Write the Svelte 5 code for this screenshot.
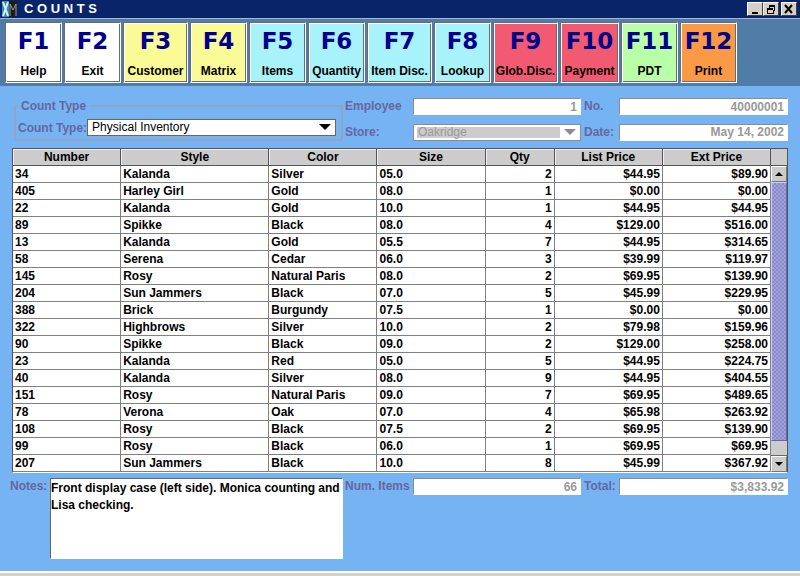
<script>
  let notes = 'Front display case (left side). Monica counting and Lisa checking.';

  const keys = [
    { key: 'F1', label: 'Help', tone: 'white' },
    { key: 'F2', label: 'Exit', tone: 'white' },
    { key: 'F3', label: 'Customer', tone: 'yellow', size: 'wide' },
    { key: 'F4', label: 'Matrix', tone: 'yellow' },
    { key: 'F5', label: 'Items', tone: 'cyan' },
    { key: 'F6', label: 'Quantity', tone: 'cyan' },
    { key: 'F7', label: 'Item Disc.', tone: 'cyan', size: 'wide' },
    { key: 'F8', label: 'Lookup', tone: 'cyan' },
    { key: 'F9', label: 'Glob.Disc.', tone: 'red', size: 'wide' },
    { key: 'F10', label: 'Payment', tone: 'red', size: 'medium' },
    { key: 'F11', label: 'PDT', tone: 'green' },
    { key: 'F12', label: 'Print', tone: 'orange' }
  ];

  const columns = ['Number', 'Style', 'Color', 'Size', 'Qty', 'List Price', 'Ext Price'];

  const rows = [
    ['34', 'Kalanda', 'Silver', '05.0', '2', '$44.95', '$89.90'],
    ['405', 'Harley Girl', 'Gold', '08.0', '1', '$0.00', '$0.00'],
    ['22', 'Kalanda', 'Gold', '10.0', '1', '$44.95', '$44.95'],
    ['89', 'Spikke', 'Black', '08.0', '4', '$129.00', '$516.00'],
    ['13', 'Kalanda', 'Gold', '05.5', '7', '$44.95', '$314.65'],
    ['58', 'Serena', 'Cedar', '06.0', '3', '$39.99', '$119.97'],
    ['145', 'Rosy', 'Natural Paris', '08.0', '2', '$69.95', '$139.90'],
    ['204', 'Sun Jammers', 'Black', '07.0', '5', '$45.99', '$229.95'],
    ['388', 'Brick', 'Burgundy', '07.5', '1', '$0.00', '$0.00'],
    ['322', 'Highbrows', 'Silver', '10.0', '2', '$79.98', '$159.96'],
    ['90', 'Spikke', 'Black', '09.0', '2', '$129.00', '$258.00'],
    ['23', 'Kalanda', 'Red', '05.0', '5', '$44.95', '$224.75'],
    ['40', 'Kalanda', 'Silver', '08.0', '9', '$44.95', '$404.55'],
    ['151', 'Rosy', 'Natural Paris', '09.0', '7', '$69.95', '$489.65'],
    ['78', 'Verona', 'Oak', '07.0', '4', '$65.98', '$263.92'],
    ['108', 'Rosy', 'Black', '07.5', '2', '$69.95', '$139.90'],
    ['99', 'Rosy', 'Black', '06.0', '1', '$69.95', '$69.95'],
    ['207', 'Sun Jammers', 'Black', '10.0', '8', '$45.99', '$367.92']
  ];
</script>

<div class="window">
  <header class="titlebar">
    <svg class="logo" width="15" height="16" viewBox="0 0 15 16" aria-hidden="true">
      <rect width="7" height="16" fill="#2a8cc0" />
      <rect x="7" width="8" height="16" fill="#1c1c1c" />
      <path d="M1 1L6 15M6 1L1 15" stroke="#d8f0f8" stroke-width="2" />
      <path d="M8 15V3L11 9L14 3V15" stroke="#a09c90" fill="none" />
    </svg>
    <h1>C O U N T S</h1>
    <div class="window-buttons">
      <button aria-label="Minimize">
        <svg width="12" height="11" viewBox="0 0 12 11"><path d="M3 9H9" stroke="#000" stroke-width="2" /></svg>
      </button>
      <button aria-label="Restore">
        <svg width="12" height="11" viewBox="0 0 12 11" shape-rendering="crispEdges">
          <path d="M4 1H10V3H4ZM2 4H8V6H2Z" fill="#000" />
          <path d="M4 3V4M9 3V7H8M2 6V10H8V6" transform="translate(.5 -.5)" stroke="#000" fill="none" />
        </svg>
      </button>
      <button class="close" aria-label="Close">
        <svg width="12" height="11" viewBox="0 0 12 11"><path d="M2 1L9 9M9 1L2 9" stroke="#000" stroke-width="2" /></svg>
      </button>
    </div>
  </header>

  <nav class="toolbar">
    {#each keys as item}
      <button class="key {item.tone} {item.size || ''}">
        <span class="key-name">{item.key}</span>
        <span>{item.label}</span>
      </button>
    {/each}
  </nav>

  <main>
    <section class="form top">
      <fieldset>
        <legend>Count Type</legend>
        <label for="count-type">Count Type:</label>
        <div class="select">
          <select id="count-type">
            <option>Physical Inventory</option>
          </select>
          <svg width="12" height="6" viewBox="0 0 12 6" aria-hidden="true"><path d="M0 0H12L6 6Z" fill="#000" /></svg>
        </div>
      </fieldset>

      <label for="employee">Employee</label>
      <input id="employee" value="1" disabled />
      <label class="second" for="number">No.</label>
      <input id="number" value="40000001" disabled />

      <label for="store">Store:</label>
      <div class="select">
        <select id="store" disabled>
          <option>Oakridge</option>
        </select>
        <svg width="12" height="6" viewBox="0 0 12 6" aria-hidden="true"><path d="M0 0H12L6 6Z" fill="#8c8c8c" /></svg>
      </div>
      <label class="second" for="date">Date:</label>
      <input id="date" value="May 14, 2002" disabled />
    </section>

    <section class="items">
      <table>
        <colgroup>
          <col class="c-number" />
          <col class="c-style" />
          <col class="c-color" />
          <col class="c-size" />
          <col class="c-qty" />
          <col class="c-price" />
          <col class="c-price" />
        </colgroup>
        <thead>
          <tr>
            {#each columns as column}
              <th>{column}</th>
            {/each}
          </tr>
        </thead>
        <tbody>
          {#each rows as row}
            <tr>
              {#each row as cell, i}
                <td class:num={i > 3}>{cell}</td>
              {/each}
            </tr>
          {/each}
        </tbody>
      </table>
      <div class="scroll">
        <div class="corner"></div>
        <button aria-label="Scroll up">
          <svg width="8" height="4" viewBox="0 0 8 4"><path d="M0 4H8L4 0Z" fill="#000" /></svg>
        </button>
        <div class="track"><div class="thumb"></div></div>
        <button aria-label="Scroll down">
          <svg width="8" height="4" viewBox="0 0 8 4"><path d="M0 0H8L4 4Z" fill="#000" /></svg>
        </button>
      </div>
    </section>

    <section class="form bottom">
      <div class="notes">
        <label for="notes">Notes:</label>
        <textarea id="notes" bind:value={notes}></textarea>
      </div>
      <label for="num-items">Num. Items</label>
      <input id="num-items" value="66" disabled />
      <label class="second" for="total">Total:</label>
      <input id="total" value="$3,833.92" disabled />
    </section>
  </main>

  <footer></footer>
</div>

<style>
  :global(body) {
    margin: 0;
  }

  .window {
    box-sizing: border-box;
    min-height: 100vh;
    display: flex;
    flex-direction: column;
    background: #76b3f2;
    font-family: 'Liberation Sans', Arial, sans-serif;
    font-size: 12px;
    font-weight: bold;
    color: #000;
  }

  .window * {
    box-sizing: border-box;
  }

  button,
  input,
  select,
  textarea {
    font: inherit;
    margin: 0;
    border-radius: 0;
  }

  /* title bar */
  .titlebar {
    display: flex;
    align-items: center;
    height: 18px;
    padding: 0 3px 0 2px;
    background: #0a246a;
    color: #fff;
  }

  h1 {
    flex: 1;
    margin: 0 0 0 7px;
    font-size: 13px;
    line-height: 18px;
  }

  .window-buttons {
    display: flex;
  }

  .window-buttons button {
    display: flex;
    align-items: center;
    justify-content: center;
    width: 16px;
    height: 14px;
    padding: 0;
    border: 1px solid;
    border-color: #fff #404040 #404040 #fff;
    background: #d4d0c8;
  }

  .window-buttons .close {
    margin-left: 2px;
  }

  /* function keys */
  .toolbar {
    display: flex;
    gap: 2px;
    padding: 3px 5px;
    border-top: 1px solid #a9b9cc;
    background: #527ca8;
  }

  .key {
    display: flex;
    flex-direction: column;
    align-items: center;
    width: 57px;
    height: 61px;
    padding: 4px 0 0;
    border: 1px solid;
    border-color: #6b6b78 #fff #fff #6b6b78;
    box-shadow: inset 1px 1px #fff, inset -1px -1px #6b6b78;
    line-height: 20px;
    white-space: nowrap;
    color: #000;
  }

  .key.wide {
    width: 65px;
  }

  .key.medium {
    width: 59px;
  }

  .key-name {
    margin-bottom: 5px;
    font-family: 'DejaVu Sans', Verdana, sans-serif;
    font-size: 23px;
    line-height: 29px;
    color: #00008b;
  }

  .white { background: #fff; }
  .yellow { background: #fafa96; }
  .cyan { background: #a8f2fa; }
  .red { background: #f25a72; }
  .green { background: #b8ffa8; }
  .orange { background: #fa9a46; }

  /* form rows */
  main {
    flex: 1;
    padding: 12px 12px 12px 10px;
  }

  .form {
    display: grid;
    grid-template-columns: 335fr 68px 168fr 38px 169fr;
    align-items: start;
  }

  .form label {
    line-height: 16px;
    white-space: nowrap;
    color: #6666a3;
  }

  .form .second {
    padding-left: 3px;
  }

  .top {
    row-gap: 8px;
    padding-bottom: 7px;
  }

  fieldset {
    grid-row: span 2;
    display: flex;
    align-items: center;
    min-width: 0;
    margin: 0 2px 0 4px;
    padding: 5px 5px 3px 2px;
    border: 2px solid #8fa5c6;
  }

  legend {
    padding: 0 3px;
    line-height: 16px;
    color: #6666a3;
  }

  fieldset .select {
    flex: 1;
  }

  input {
    width: 100%;
    height: 17px;
    padding: 0 3px;
    border: 1px solid;
    border-color: #8c8c8c #fff #fff #8c8c8c;
    background: #fff;
    text-align: right;
    color: #999;
  }

  .select {
    position: relative;
  }

  .select svg {
    position: absolute;
    top: 5px;
    right: 5px;
    pointer-events: none;
  }

  select {
    display: block;
    appearance: none;
    width: 100%;
    height: 17px;
    padding: 0 4px;
    border: 1px solid #666;
    background: #fff;
    font-weight: normal;
    line-height: 15px;
    color: #000;
  }

  select:disabled {
    border-color: #8c8c8c;
    box-shadow: inset 3px 0 #fff, inset 0 2px #fff, inset -20px 0 #fff, inset 0 -2px #fff;
    background: #ccc;
    color: #999;
    opacity: 1;
  }

  /* item table */
  .items {
    display: flex;
    margin-left: 2px;
    border: 1px solid #555;
    border-bottom-color: #fff;
    background: #fff;
  }

  /* column widths are shared out in proportion when the table grows */
  table {
    flex: 1;
    width: 100%;
    table-layout: fixed;
    border-collapse: separate;
    border-spacing: 0;
  }

  .c-number, .c-color, .c-size, .c-price { width: 108px; }
  .c-style { width: 148px; }
  .c-qty { width: 69px; }

  th,
  td {
    height: 17px;
    padding: 0 2px;
    overflow: hidden;
    border-right: 1px solid #808080;
    border-bottom: 1px solid #808080;
    line-height: 16px;
    text-align: left;
    white-space: nowrap;
  }

  th {
    border-color: #555;
    background: #ccc;
    box-shadow: inset 1px 1px #eee;
    text-align: center;
  }

  .num {
    text-align: right;
  }

  .scroll {
    flex: none;
    display: flex;
    flex-direction: column;
    width: 16px;
  }

  .corner {
    height: 17px;
    border-bottom: 1px solid #555;
    background: #ccc;
  }

  .scroll button {
    display: flex;
    align-items: center;
    justify-content: center;
    height: 16px;
    padding: 0;
    border: 1px solid;
    border-color: #fff #777 #777 #fff;
    background: #ccc;
  }

  .track {
    flex: 1;
    padding-bottom: 14px;
    border-bottom: 1px solid #666;
    background: #ccc;
  }

  .thumb {
    height: 100%;
    border: 1px solid;
    border-color: #ccccff #6666a3 #6666a3 #ccccff;
    background: repeating-conic-gradient(#8a8acb 0 25%, #a3a3dc 0 50%) 0 0 / 4px 4px;
  }

  /* notes and totals */
  .bottom {
    padding-top: 5px;
  }

  .notes {
    display: flex;
    align-items: flex-start;
    margin-right: 2px;
  }

  .notes label {
    width: 40px;
  }

  textarea {
    flex: 1;
    min-width: 0;
    height: 81px;
    padding: 1px 0;
    border: 1px solid;
    border-color: #666 #fff #fff #666;
    outline: 0;
    background: #fff;
    line-height: 17px;
    resize: none;
    color: #000;
  }

  footer {
    height: 5px;
    border-top: 2px solid #fff;
    background: #d4d0c8;
  }
</style>
